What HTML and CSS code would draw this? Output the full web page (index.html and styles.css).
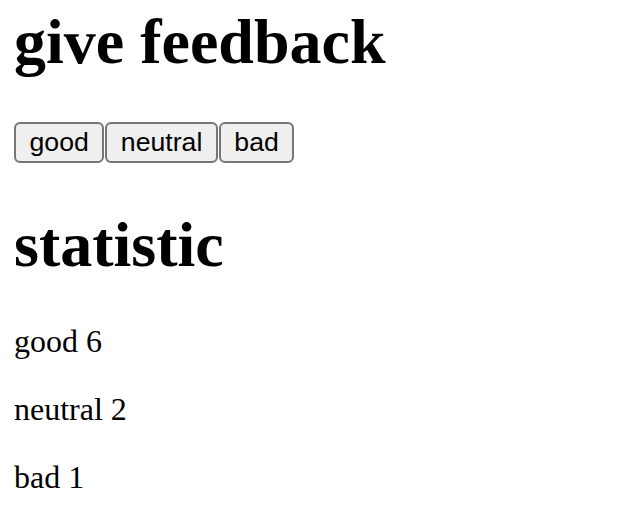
FILE: index.html
```html
<!DOCTYPE html>
<html>
<head>
<meta charset="utf-8">
<link rel="stylesheet" href="styles.css">
</head>
<body>
<h1 class="title">give feedback</h1>
<div class="buttons"><button class="btn">good</button><button class="btn">neutral</button><button class="btn">bad</button></div>
<h1 class="title stat-title">statistic</h1>
<p class="stat">good 6</p>
<p class="stat">neutral 2</p>
<p class="stat">bad 1</p>
</body>
</html>
```
FILE: styles.css
```css
html, body {
  background: #fff;
}
body {
  margin: 0;
  padding: 5px 14px 0;
  font-family: "Liberation Serif", "Times New Roman", serif;
  font-size: 32px;
  color: #000;
}
.title {
  font-size: 64px;
  font-weight: bold;
  margin: 0 0 43px;
  line-height: normal;
}
.buttons {
  display: flex;
  gap: 1px;
  margin-bottom: 45px;
}
.btn {
  font-family: "Liberation Sans", Arial, sans-serif;
  font-size: 26.67px;
  color: #000;
  height: 41px;
  padding: 0 13.5px;
  border: 2px solid #767676;
  border-radius: 6px;
  background: #efefef;
  line-height: 1;
}
.stat-title {
  margin-bottom: 41px;
}
.stat {
  margin: 0 0 32px;
  line-height: 36px;
}
```
